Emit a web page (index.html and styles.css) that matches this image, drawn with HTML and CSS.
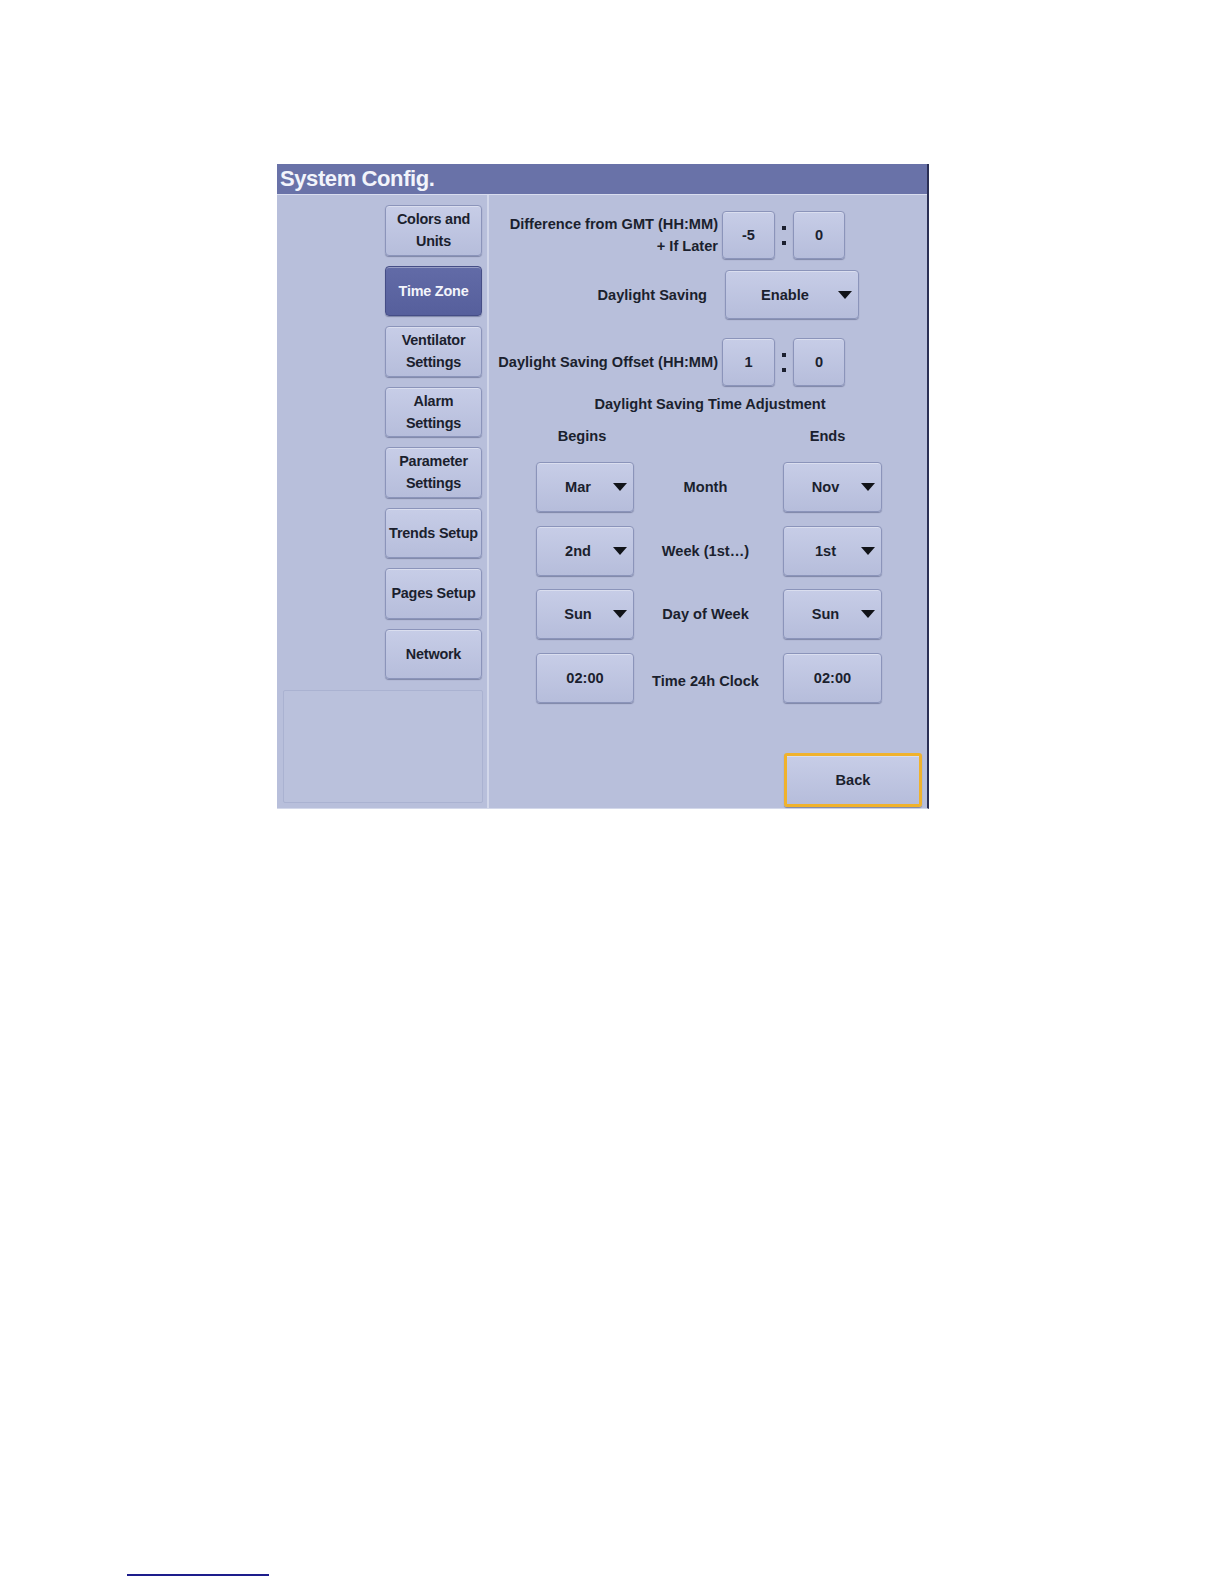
FILE: index.html
```html
<!DOCTYPE html>
<html lang="en">
<head>
<meta charset="utf-8">
<title>System Config.</title>
<link rel="stylesheet" href="styles.css">
</head>
<body>
<div class="panel">
  <div class="titlebar">System Config.</div>
  <div class="panel-body">
    <div class="sidebar">
      <nav class="nav">
        <div class="btn nav-btn">Colors and<br>Units</div>
        <div class="btn nav-btn active">Time Zone</div>
        <div class="btn nav-btn">Ventilator<br>Settings</div>
        <div class="btn nav-btn">Alarm<br>Settings</div>
        <div class="btn nav-btn">Parameter<br>Settings</div>
        <div class="btn nav-btn">Trends Setup</div>
        <div class="btn nav-btn">Pages Setup</div>
        <div class="btn nav-btn">Network</div>
      </nav>
      <div class="side-box"></div>
    </div>
    <div class="content">
      <div class="field-row row-gmt">
        <div class="field-label">Difference from GMT (HH:MM)<br>+ If Later</div>
        <div class="time-pair">
          <div class="btn box box-a">-5</div>
          <span class="colon"><i></i><i></i></span>
          <div class="btn box box-b">0</div>
        </div>
      </div>
      <div class="field-row row-ds">
        <div class="field-label label-ds">Daylight Saving</div>
        <div class="btn dropdown dd-wide"><span class="dd-text">Enable</span><span class="dd-arrow"></span></div>
      </div>
      <div class="field-row row-offset">
        <div class="field-label">Daylight Saving Offset (HH:MM)</div>
        <div class="time-pair">
          <div class="btn box box-a">1</div>
          <span class="colon"><i></i><i></i></span>
          <div class="btn box box-b">0</div>
        </div>
      </div>
      <div class="section-title">Daylight Saving Time Adjustment</div>
      <div class="adj-head">
        <span class="head-begins">Begins</span>
        <span></span>
        <span class="head-ends">Ends</span>
      </div>
      <div class="adj-grid">
        <div class="btn dropdown"><span class="dd-text">Mar</span><span class="dd-arrow"></span></div>
        <div class="adj-label">Month</div>
        <div class="btn dropdown"><span class="dd-text">Nov</span><span class="dd-arrow"></span></div>

        <div class="btn dropdown"><span class="dd-text">2nd</span><span class="dd-arrow"></span></div>
        <div class="adj-label">Week (1st…)</div>
        <div class="btn dropdown"><span class="dd-text">1st</span><span class="dd-arrow"></span></div>

        <div class="btn dropdown"><span class="dd-text">Sun</span><span class="dd-arrow"></span></div>
        <div class="adj-label">Day of Week</div>
        <div class="btn dropdown"><span class="dd-text">Sun</span><span class="dd-arrow"></span></div>

        <div class="btn time-btn">02:00</div>
        <div class="adj-label label-low">Time 24h Clock</div>
        <div class="btn time-btn">02:00</div>
      </div>
      <div class="btn back-btn">Back</div>
    </div>
  </div>
</div>
<div class="footer-rule"></div>
</body>
</html>
```
FILE: styles.css
```css
* {
  box-sizing: border-box;
}

html, body {
  margin: 0;
  padding: 0;
  background: #ffffff;
}

body {
  font-family: "Liberation Sans", Arial, sans-serif;
  color: #1b1f2e;
  width: 1224px;
  height: 1584px;
  overflow: hidden;
}

.panel {
  margin: 164px 0 0 277px;
  width: 652px;
  background: #b8bfdb;
  border-right: 2px solid #2a2f55;
  border-bottom: 1px solid #d3d8ea;
}

.titlebar {
  height: 31px;
  background: #6972a8;
  border-bottom: 1px solid #d8dcee;
  color: #f2f4fb;
  font-size: 22px;
  font-weight: bold;
  letter-spacing: -0.4px;
  line-height: 30px;
  padding-left: 3px;
}

.panel-body {
  display: flex;
  height: 613px;
}

.sidebar {
  width: 212px;
  display: flex;
  flex-direction: column;
  border-right: 2px solid #d2d7ea;
}

.nav {
  display: flex;
  flex-direction: column;
  align-items: flex-end;
  gap: 10px;
  padding: 10px 5px 0 0;
}

.btn {
  display: flex;
  align-items: center;
  justify-content: center;
  background: linear-gradient(#c7cde7, #b6bddb);
  border: 1px solid #8b94ba;
  border-radius: 4px;
  box-shadow: 0 1px 1px rgba(55, 62, 105, 0.45), inset 0 1px 0 rgba(255, 255, 255, 0.35);
  font-weight: bold;
  font-size: 14.6px;
  color: #1b1f2e;
  text-align: center;
}

.nav-btn {
  width: 97px;
  height: 50.5px;
  font-size: 14.4px;
  letter-spacing: -0.2px;
  line-height: 22px;
}

.nav-btn.active {
  background: linear-gradient(#626ba7, #565f9c);
  border-color: #454d86;
  color: #f3f4fb;
}

.side-box {
  flex: 1;
  margin: 11px 4px 5px 6px;
  border: 1px solid #aab2d1;
  border-radius: 2px;
  background: #bac1dc;
}

.content {
  flex: 1;
  display: flex;
  flex-direction: column;
  padding-top: 16px;
  font-size: 14.6px;
  font-weight: bold;
}

.field-row {
  display: flex;
  align-items: center;
}

.field-label {
  width: 229px;
  text-align: right;
  line-height: 22px;
}

.row-gmt {
  height: 48px;
}

.row-ds {
  height: 49px;
  margin-top: 11px;
}

.label-ds {
  padding-right: 11px;
}

.row-offset {
  height: 48px;
  margin-top: 19px;
}

.time-pair {
  display: flex;
  align-items: stretch;
  height: 100%;
  margin-left: 4px;
}

.box-a {
  width: 53px;
}

.box-b {
  width: 52px;
}

.colon {
  width: 18px;
  display: flex;
  flex-direction: column;
  align-items: center;
  justify-content: center;
  gap: 11px;
}

.colon i {
  display: block;
  width: 4px;
  height: 4px;
  background: #1b1f2e;
}

.dropdown {
  justify-content: space-between;
  padding: 0 6px;
}

.dd-wide {
  width: 134px;
  height: 100%;
  margin-left: 7px;
}

.dd-text {
  flex: 1;
  text-align: center;
}

.dd-arrow {
  width: 0;
  height: 0;
  border-left: 7.5px solid transparent;
  border-right: 7.5px solid transparent;
  border-top: 8px solid #111318;
}

.section-title {
  margin-top: 9px;
  line-height: 18px;
  text-align: center;
  padding-left: 4px;
}

.adj-head {
  display: grid;
  grid-template-columns: 98px 149px 99px;
  margin: 14px 0 0 47px;
  line-height: 18px;
  text-align: center;
}

.head-begins {
  padding-right: 6px;
}

.head-ends {
  padding-right: 10px;
}

.adj-grid {
  display: grid;
  grid-template-columns: 98px 149px 99px;
  grid-auto-rows: 50px;
  row-gap: 13.67px;
  margin: 17px 0 0 47px;
}

.adj-label {
  display: flex;
  align-items: center;
  justify-content: center;
  padding-right: 6px;
}

.label-low {
  padding-top: 7px;
}

.back-btn {
  align-self: flex-end;
  width: 138px;
  height: 54px;
  margin: 50px 5px 0 0;
  border: 3px solid #f0b22c;
  border-radius: 3px;
}

.footer-rule {
  margin: 765px 0 0 127px;
  width: 142px;
  height: 1.5px;
  background: #1d1d8c;
}
```
